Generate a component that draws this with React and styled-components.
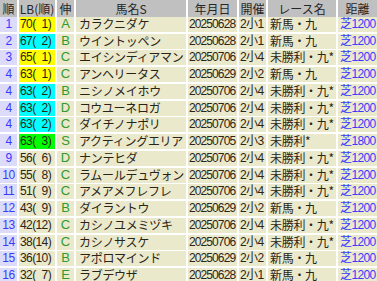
import React from "react";
import styled, { createGlobalStyle } from "styled-components";

const GlobalStyle = createGlobalStyle`
  body {
    margin: 0;
    background: #ffffff;
  }
`;

const Table = styled.div`
  display: grid;
  grid-auto-rows: 14.75px;
  row-gap: 2px;
  width: 377px;
  font-family: "Liberation Sans", "Noto Sans CJK JP", sans-serif;
  font-size: 12px;
  color: #222;
`;

const Row = styled.div`
  display: grid;
  grid-template-columns: 17px 36px 17px 110px 49px 27px 68px 1fr;
  column-gap: 2px;
`;

const Head = styled.div`
  display: flex;
  align-items: flex-start;
  justify-content: center;
  background: #c0c0c0;
  color: #262626;
  font-family: "Noto Sans CJK JP", sans-serif;
  font-size: 12px;
  line-height: 17.4px;
  white-space: nowrap;
`;

const Cell = styled.div`
  display: flex;
  align-items: center;
  justify-content: ${(p) => (p.$center ? "center" : "flex-start")};
  padding-left: ${(p) => (p.$center ? 0 : p.$pad || 2)}px;
  padding-bottom: 1px;
  background: ${(p) => p.$bg || "#ebe9cb"};
  color: ${(p) => p.$color || "#2a2418"};
  white-space: pre;
  line-height: 14px;
`;

const Num = styled.span`
  font-size: 12px;
  letter-spacing: ${(p) => p.$ls || 0}px;
`;

const Grade = styled.span`
  font-size: 13px;
`;

const Kana = styled.span`
  font-family: "Noto Sans CJK JP", sans-serif;
  font-size: 12px;
  letter-spacing: -0.3px;
`;

const lbColors = {
  1: "#ffff00",
  2: "#00ffff",
  3: "#00ff00",
};

const rows = [
  ["1", 70, 1, "A", "カラクニダケ", "20250628", "2小1", "新馬・九", "芝1200"],
  ["2", 67, 2, "B", "ウイントッペン", "20250628", "2小1", "新馬・九", "芝1200"],
  ["3", 65, 1, "C", "エイシンディアマン", "20250706", "2小4", "未勝利・九*", "芝1200"],
  ["4", 63, 1, "C", "アンヘリータス", "20250629", "2小2", "新馬・九", "芝1200"],
  ["4", 63, 2, "B", "ニシノメイホウ", "20250706", "2小4", "未勝利・九*", "芝1200"],
  ["4", 63, 2, "D", "コウユーネロガ", "20250706", "2小4", "未勝利・九*", "芝1200"],
  ["4", 63, 2, "C", "ダイチノナポリ", "20250706", "2小4", "未勝利・九*", "芝1200"],
  ["4", 63, 3, "S", "アクティングエリア", "20250705", "2小3", "未勝利*", "芝1800"],
  ["9", 56, 6, "D", "ナンテヒダ", "20250706", "2小4", "未勝利・九*", "芝1200"],
  ["10", 55, 8, "C", "ラムールデュヴォン", "20250706", "2小4", "未勝利・九*", "芝1200"],
  ["11", 51, 9, "C", "アメアメフレフレ", "20250706", "2小4", "未勝利・九*", "芝1200"],
  ["12", 43, 9, "B", "ダイラントウ", "20250629", "2小2", "新馬・九", "芝1200"],
  ["13", 42, 12, "C", "カシノユメミヅキ", "20250706", "2小4", "未勝利・九*", "芝1200"],
  ["14", 38, 14, "C", "カシノサスケ", "20250706", "2小4", "未勝利・九*", "芝1200"],
  ["15", 36, 10, "B", "アポロマインド", "20250629", "2小2", "新馬・九", "芝1200"],
  ["16", 32, 7, "E", "ラブデウザ", "20250628", "2小1", "新馬・九", "芝1200"],
];

// figure space keeps single-digit ranks as wide as two digits
const pad2 = (n) => (n < 10 ? "\u2007" + n : String(n));

export default function App() {
  return (
    <>
      <GlobalStyle />
      <Table>
        <Row>
          <Head>順</Head>
          <Head>LB(順)</Head>
          <Head>伸</Head>
          <Head>馬名S</Head>
          <Head>年月日</Head>
          <Head>開催</Head>
          <Head>レース名</Head>
          <Head>距離</Head>
        </Row>
        {rows.map((r, i) => (
          <Row key={i}>
            <Cell $center $bg="#dcdcfa" $color="#3a3aff">
              <Num $ls={-0.5}>{r[0]}</Num>
            </Cell>
            <Cell $bg={lbColors[r[2]]} $pad={1}>
              <Num $ls={-0.6}>{`${r[1]}(${pad2(r[2])})`}</Num>
            </Cell>
            <Cell $center $color="#2f9a2f">
              <Grade>{r[3]}</Grade>
            </Cell>
            <Cell $pad={3}>
              <Kana>{r[4]}</Kana>
            </Cell>
            <Cell $pad={1}>
              <Num $ls={-0.9}>{r[5]}</Num>
            </Cell>
            <Cell $pad={1}>
              <Num $ls={-0.6}>{r[6]}</Num>
            </Cell>
            <Cell $pad={2}>
              <Kana>{r[7]}</Kana>
            </Cell>
            <Cell $pad={2} $color="#3a3aff">
              <Num $ls={-0.6}>{r[8]}</Num>
            </Cell>
          </Row>
        ))}
      </Table>
    </>
  );
}
